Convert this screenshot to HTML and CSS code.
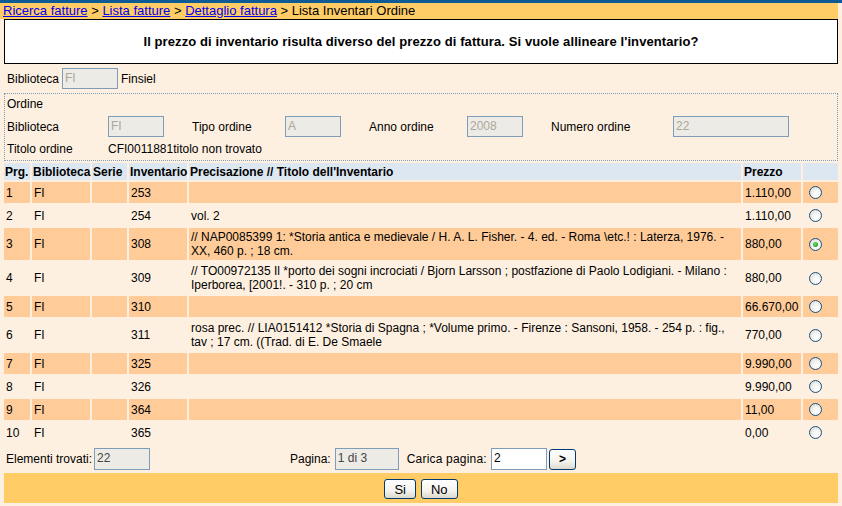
FILE: index.html
```html
<!DOCTYPE html>
<html lang="it">
<head>
<meta charset="utf-8">
<title>Lista Inventari Ordine</title>
<link rel="stylesheet" href="styles.css">
</head>
<body>
<div class="topbar"></div>
<div class="crumbs"><a href="#">Ricerca fatture</a> &gt; <a href="#">Lista fatture</a> &gt; <a href="#">Dettaglio fattura</a> &gt; Lista Inventari Ordine</div>
<div class="page">
  <div class="message">Il prezzo di inventario risulta diverso del prezzo di fattura. Si vuole allineare l'inventario?</div>
  <div class="bib-row">
    <span class="lbl">Biblioteca</span>
    <span class="field w56 dis">FI</span>
    <span class="lbl">Finsiel</span>
  </div>
  <div class="ordine">
    <div class="ord-title">Ordine</div>
    <div class="ord-grid">
      <span class="c1">Biblioteca</span>
      <span class="c2"><span class="field w56 dis">FI</span></span>
      <span class="c3">Tipo ordine</span>
      <span class="c4"><span class="field w56 dis">A</span></span>
      <span class="c5">Anno ordine</span>
      <span class="c6"><span class="field w56 dis">2008</span></span>
      <span class="c7">Numero ordine</span>
      <span class="c8"><span class="field w116 dis">22</span></span>
    </div>
    <div class="ord-tit">
      <span class="c1">Titolo ordine</span>
      <span>CFI0011881titolo non trovato</span>
    </div>
  </div>
  <table class="grid">
    <colgroup>
      <col class="k-prg"><col class="k-bib"><col class="k-ser"><col class="k-inv"><col class="k-desc"><col class="k-prz"><col class="k-rad">
    </colgroup>
    <thead>
      <tr><th>Prg.</th><th>Biblioteca</th><th>Serie</th><th>Inventario</th><th>Precisazione // Titolo dell'Inventario</th><th>Prezzo</th><th></th></tr>
    </thead>
    <tbody>
      <tr class="hl"><td>1</td><td>FI</td><td></td><td>253</td><td></td><td>1.110,00</td><td><span class="radio"></span></td></tr>
      <tr><td>2</td><td>FI</td><td></td><td>254</td><td>vol. 2</td><td>1.110,00</td><td><span class="radio"></span></td></tr>
      <tr class="hl"><td>3</td><td>FI</td><td></td><td>308</td><td>// NAP0085399 1: *Storia antica e medievale / H. A. L. Fisher. - 4. ed. - Roma \etc.! : Laterza, 1976. - XX, 460 p. ; 18 cm.</td><td>880,00</td><td><span class="radio on"></span></td></tr>
      <tr><td>4</td><td>FI</td><td></td><td>309</td><td>// TO00972135 Il *porto dei sogni incrociati / Bjorn Larsson ; postfazione di Paolo Lodigiani. - Milano : Iperborea, [2001!. - 310 p. ; 20 cm</td><td>880,00</td><td><span class="radio"></span></td></tr>
      <tr class="hl"><td>5</td><td>FI</td><td></td><td>310</td><td></td><td>66.670,00</td><td><span class="radio"></span></td></tr>
      <tr><td>6</td><td>FI</td><td></td><td>311</td><td>rosa prec. // LIA0151412 *Storia di Spagna ; *Volume primo. - Firenze : Sansoni, 1958. - 254 p. : fig., tav ; 17 cm. ((Trad. di E. De Smaele</td><td>770,00</td><td><span class="radio"></span></td></tr>
      <tr class="hl"><td>7</td><td>FI</td><td></td><td>325</td><td></td><td>9.990,00</td><td><span class="radio"></span></td></tr>
      <tr><td>8</td><td>FI</td><td></td><td>326</td><td></td><td>9.990,00</td><td><span class="radio"></span></td></tr>
      <tr class="hl"><td>9</td><td>FI</td><td></td><td>364</td><td></td><td>11,00</td><td><span class="radio"></span></td></tr>
      <tr><td>10</td><td>FI</td><td></td><td>365</td><td></td><td>0,00</td><td><span class="radio"></span></td></tr>
    </tbody>
  </table>
  <div class="footer">
    <div class="f-left">
      <span>Elementi trovati:</span>
      <span class="field w56 ro">22</span>
    </div>
    <div class="f-mid">
      <span>Pagina:</span>
      <span class="field w64 ro">1 di 3</span>
      <span class="car">Carica pagina:</span>
      <span class="field w56 white">2</span>
      <span class="btn small">&gt;</span>
    </div>
  </div>
  <div class="actions">
    <span class="btn">Si</span>
    <span class="btn">No</span>
  </div>
</div>
</body>
</html>
```
FILE: styles.css
```css
html, body {
  margin: 0;
  padding: 0;
}
body {
  background: #fef0e1;
  font-family: "Liberation Sans", Arial, sans-serif;
  font-size: 12px;
  color: #000;
  width: 842px;
  height: 506px;
  overflow: hidden;
}
.topbar {
  height: 3px;
  background: #0d5a95;
}
.crumbs {
  height: 16px;
  line-height: 16px;
  font-size: 13px;
  background: #ffcc66;
  padding-left: 3px;
  margin-right: 4px;
  white-space: nowrap;
}
.crumbs a {
  color: #0000ee;
  text-decoration: underline;
}
.page {
  padding: 0 4px;
}
.message {
  height: 43px;
  border: 1px solid #000;
  background: #fff;
  display: flex;
  align-items: center;
  justify-content: center;
  font-weight: bold;
  font-size: 13px;
  letter-spacing: 0.1px;
}
.bib-row {
  display: flex;
  align-items: center;
  margin-top: 4px;
  height: 21px;
  padding-left: 3px;
}
.bib-row .field {
  margin: 0 3px 0 3px;
}
.field {
  display: inline-block;
  box-sizing: border-box;
  height: 21px;
  line-height: 19px;
  border: 1px solid #7f9db9;
  background: #ecebe6;
  padding-left: 2px;
  font-size: 12px;
  vertical-align: middle;
}
.field.dis { color: #aca899; }
.field.ro { color: #444; height: 22px; line-height: 18px; }
.field.white { background: #fff; color: #000; height: 22px; line-height: 18px; }
.w56 { width: 56px; }
.w64 { width: 64px; }
.w116 { width: 116px; }
.ordine {
  margin-top: 4px;
  border: 1px dotted #7f9db9;
  padding: 3px 2px 3px 2px;
  height: 60px;
}
.ord-title {
  line-height: 14px;
}
.ord-grid {
  display: grid;
  grid-template-columns: 101px 84px 93px 84px 98px 84px 122px 116px;
  align-items: center;
  height: 21px;
  margin-top: 5px;
}
.ord-tit {
  display: grid;
  grid-template-columns: 101px auto;
  line-height: 14px;
  margin-top: 5px;
}
.grid {
  margin: 0 -2px;
  width: 838px;
  table-layout: fixed;
  border-collapse: separate;
  border-spacing: 2px;
}
.k-prg { width: 26px; }
.k-bib { width: 58px; }
.k-ser { width: 35px; }
.k-inv { width: 58px; }
.k-desc { width: 552px; }
.k-prz { width: 58px; }
.k-rad { width: 35px; }
.grid th {
  background: #dde7f1;
  font-weight: bold;
  text-align: left;
  height: 17px;
  padding: 0 0 0 1px;
  line-height: 14px;
  white-space: nowrap;
  overflow: visible;
}
.grid td {
  height: 17px;
  padding: 2px 2px;
  line-height: 14px;
  vertical-align: middle;
}
.grid tr.hl td {
  background: #ffcc99;
}
.radio {
  display: block;
  box-sizing: border-box;
  width: 13px;
  height: 13px;
  margin-left: 4px;
  border-radius: 50%;
  border: 1px solid #1c5180;
  background: radial-gradient(circle at 60% 65%, #ffffff 0%, #f4f4f0 40%, #d4d4cc 100%);
  position: relative;
}
.radio.on::after {
  content: "";
  position: absolute;
  left: 3px;
  top: 3px;
  width: 5px;
  height: 5px;
  border-radius: 50%;
  background: radial-gradient(circle at 40% 40%, #6fe36f 0%, #21a121 70%);
}
.footer {
  display: flex;
  align-items: center;
  height: 22px;
  margin-top: 3px;
}
.f-left {
  width: 286px;
  padding-left: 2px;
  box-sizing: border-box;
  display: flex;
  align-items: center;
  gap: 2px;
}
.f-mid {
  display: flex;
  align-items: center;
}
.f-mid .field.ro { margin-left: 4px; }
.car { margin-left: 8px; margin-right: 4px; letter-spacing: 0.2px; }
.btn {
  display: inline-flex;
  align-items: center;
  justify-content: center;
  box-sizing: border-box;
  height: 20px;
  border: 1px solid #003c74;
  border-radius: 3px;
  background: linear-gradient(#ffffff, #f4f3ee 60%, #dcd9cc);
  font-size: 13px;
  padding: 0 9px;
  color: #000;
}
.btn.small {
  width: 27px;
  height: 21px;
  padding: 0;
  margin-left: 2px;
  font-size: 12px;
  font-weight: bold;
}
.actions {
  margin-top: 3px;
  height: 30px;
  background: #ffcc66;
  display: flex;
  justify-content: center;
  align-items: center;
  gap: 5px;
  padding-top: 2px;
  box-sizing: border-box;
}
```
